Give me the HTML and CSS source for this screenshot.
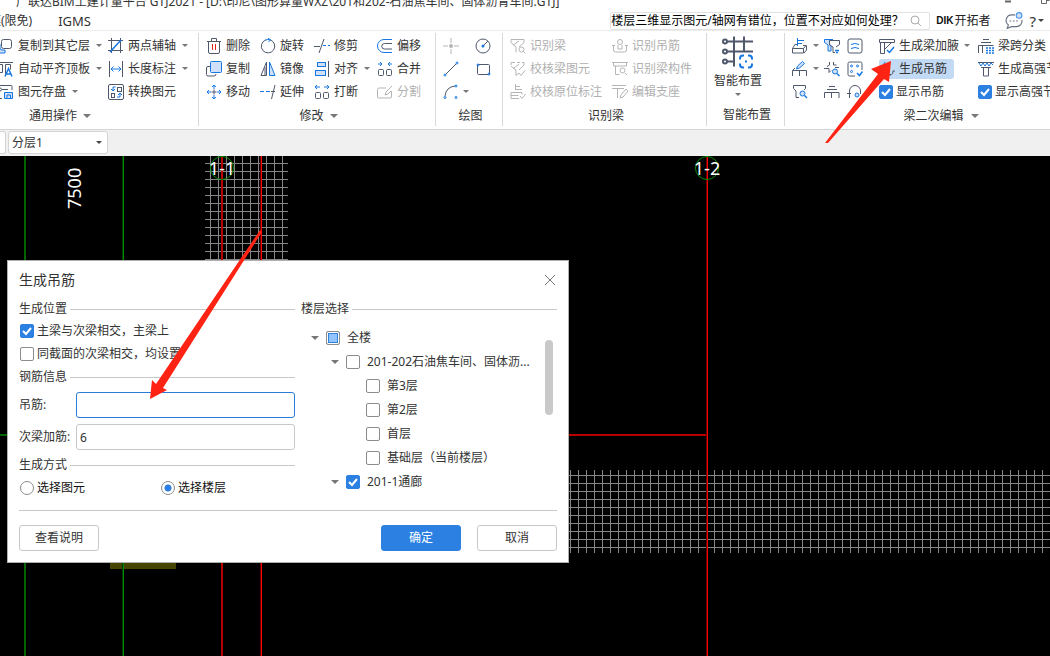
FILE: index.html
```html
<!DOCTYPE html>
<html lang="zh-CN">
<head>
<meta charset="utf-8">
<title>GTJ2021</title>
<link rel="stylesheet" href="styles.css">
</head>
<body>
<svg class="defs" aria-hidden="true">
  <symbol id="copyto" viewBox="0 0 22 16"><path class="b" fill="#cfe0f8" d="M0 6h8v4q0 2 2 2h3v3H0z"/><rect class="g" x="9.500" y="1.500" width="10" height="9" rx="2"/></symbol>
  <symbol id="flat" viewBox="0 0 22 16"><path class="g" d="M0 1.500h21M6.500 3.500h4v8h-4zM0 3.500h3v8H0M13.500 13V3.500h5v5"/><path class="b w" d="M13 15.500l3.500-8 3.500 8M14.500 13h4"/></symbol>
  <symbol id="save" viewBox="0 0 22 16"><path class="g" d="M0 1.500h19q1 0 1 1V6M0 14.500h10M3 5.500h4M10 5.500h6M3 10.500h4"/><circle class="g" cx="8" cy="5.500" r="1.500"/><circle class="g" cx="6" cy="10.500" r="1.500"/><path class="b" fill="#cfe0f8" d="M12.500 8.500h8v6h-8zM15 14v-3h3.500v3"/></symbol>
  <symbol id="axis" viewBox="0 0 16 16"><path class="g" d="M0 2.500h15M3.500 0v15M12.500 0v15M0 12.500h15"/><path class="b w" d="M2 14L13 2"/></symbol>
  <symbol id="length" viewBox="0 0 16 16"><path class="g" d="M1.500 0v16M14.500 0v16"/><path class="b" d="M3 8h10M5.500 5.500L3 8l2.500 2.500M10.500 5.500L13 8l-2.500 2.500"/></symbol>
  <symbol id="convert" viewBox="0 0 16 16"><rect class="g" x=".5" y=".5" width="15" height="15" rx="1.500"/><rect class="g" x="9.500" y="3.500" width="4" height="4"/><rect class="g" x="3.500" y="9.500" width="3" height="4"/><path class="b" d="M7.500 3H5v4M3 5l2 2 2-2M9 13h3V9.500M10 11l2-2 2 2"/></symbol>
  <symbol id="trash" viewBox="0 0 16 16"><path class="g" d="M1 3.500h14M5.500 3V.5h5V3M2.500 4v10q0 1.500 1.500 1.500h8q1.500 0 1.500-1.500V4"/><path d="M6.500 6v6M9.500 6v6" stroke="#e02020" fill="none"/></symbol>
  <symbol id="rotate" viewBox="0 0 16 16"><path class="g" d="M10 1.800A6.700 6.700 0 1 1 5.500 2"/><path class="b" d="M5 2.200Q8 1 10.500 1.800M8 0l2.500 1.800L8.500 4"/></symbol>
  <symbol id="trim" viewBox="0 0 16 16"><path class="g" d="M0 8.500h6M5 15L10 1"/><path class="b" d="M9 7.500h3M14 7.500h2"/></symbol>
  <symbol id="offset" viewBox="0 0 16 16"><path class="b" d="M15 1.500H7a6.500 6.500 0 0 0 0 13h8"/><path class="g" d="M15 5.500H7.500a2.500 2.500 0 0 0 0 5.500H15"/></symbol>
  <symbol id="copy" viewBox="0 0 16 16"><path class="g" d="M4 5.500H2q-1.500 0-1.500 1.500v6.500Q.5 15 2 15h6q2 0 2-2"/><rect class="b" fill="#cfe0f8" x="4.500" y=".5" width="11" height="11" rx="1"/></symbol>
  <symbol id="mirror" viewBox="0 0 16 16"><path class="g" d="M6.500 1v13.500H1z"/><path class="g" d="M5 6v8"/><path class="b" fill="#cfe0f8" d="M9.500 1v13.500H15z"/></symbol>
  <symbol id="align" viewBox="0 0 16 16"><rect class="b" fill="#cfe0f8" x="3.500" y="1.500" width="8" height="4"/><rect class="b" fill="#cfe0f8" x="1.500" y="9.500" width="10" height="5"/><path class="g" d="M14.500 0v16"/></symbol>
  <symbol id="merge" viewBox="0 0 16 16"><path class="b" d="M1 3h4M3 1l2 2-2 2M15 3h-4M13 1l-2 2 2 2"/><rect class="g" x="1.500" y="8.500" width="5" height="6" rx="1"/><rect class="g" x="9.500" y="8.500" width="5" height="6" rx="1"/></symbol>
  <symbol id="move" viewBox="0 0 16 16"><path class="b" d="M8 1v4M8 11v4M1 8h4M11 8h4M6 3l2-2 2 2M6 13l2 2 2-2M3 6L1 8l2 2M13 6l2 2-2 2"/><path class="g" d="M8 5.500v5M5.500 8h5"/></symbol>
  <symbol id="extend" viewBox="0 0 16 16"><path class="b" d="M0 7.500h4M6 7.500h4"/><path class="g" d="M11 7.500h4M11.500 15L15 1"/></symbol>
  <symbol id="break" viewBox="0 0 16 16"><path class="b" d="M1 3h5M3 1L1 3l2 2M10 3h5M13 1l2 2-2 2"/><rect class="g" x="1.500" y="8.500" width="5" height="6" rx="1"/><rect class="g" x="9.500" y="8.500" width="5" height="6" rx="1"/></symbol>
  <symbol id="split" viewBox="0 0 16 16"><path class="d" d="M9 4H2q-1.500 0-1.500 1.500V13q0 1 1.500 1h11q1.500 0 1.500-1V7M8 11l1-3 6-6M8 11l3-1 3-3"/></symbol>
  <symbol id="point" viewBox="0 0 16 16"><path class="d" d="M8 0v5M8 11v5M0 8h5M11 8h5"/><circle cx="8" cy="8" r="2" fill="#b5b5b5"/></symbol>
  <symbol id="circle" viewBox="0 0 16 16"><circle class="g" cx="8" cy="8" r="7"/><path class="g" d="M8 8l5-5"/><circle cx="8" cy="8" r="1.500" fill="#1677e0"/></symbol>
  <symbol id="line" viewBox="0 0 16 16"><path class="g" d="M3 13L13 3"/><circle class="b" cx="2" cy="14" r="1"/><circle class="b" cx="14" cy="2" r="1"/></symbol>
  <symbol id="rect" viewBox="0 0 16 16"><rect class="g" x="2.500" y="3.500" width="12" height="10" rx="1"/><circle class="b" cx="3" cy="4" r="1"/><circle class="b" cx="14" cy="13" r="1"/></symbol>
  <symbol id="arc" viewBox="0 0 16 16"><path class="g" d="M2 12Q3 3 12 2"/><circle class="b" cx="2" cy="13.500" r="1"/><circle class="b" cx="13" cy="2" r="1"/><circle class="b" cx="13" cy="13.500" r="1"/></symbol>
  <symbol id="beam" viewBox="0 0 16 16"><path class="d" d="M1 1.500h13v3L9 9M1 1.500v3l5 4.500v5.500M9 3L3 7"/><circle class="d" cx="11.500" cy="11.500" r="2.500"/><path class="d" d="M13.500 13.500l2 2"/></symbol>
  <symbol id="check" viewBox="0 0 16 16"><path class="d" d="M1 4V1.500h4M7 1.500h3M12 1.500h2V4l-5 5M1 5l5 4v5.500L9 12M9 3L3 8M9 12l2 2.500 4-5"/></symbol>
  <symbol id="origin" viewBox="0 0 16 16"><path class="d" d="M5.500 0v6M6 2.500h4M6 5.500h6M1 8.500h11v2M.5 11.500h8M1 8.500v6h8M10 12l2 2.500 4-5"/></symbol>
  <symbol id="hang" viewBox="0 0 16 16"><circle class="d" cx="8" cy="4" r="2.500"/><path class="d" d="M6 7v4h4V7M0 7.500h3M13 7.500h3M1.500 8v4q0 2 2 2h9q2 0 2-2V8"/></symbol>
  <symbol id="member" viewBox="0 0 16 16"><path class="d" d="M0 1.500h16M1.500 2v3h13V2M3.500 5v8.500h4"/><circle class="d" cx="10.500" cy="9.500" r="2.500"/><path class="d" d="M13 12l2 2"/></symbol>
  <symbol id="seat" viewBox="0 0 16 16"><path class="d" d="M0 1.500h14M0 4.500h12M5.500 5v9M9 11l5-6 2 2-5 6-3 1z"/></symbol>
  <symbol id="smart" viewBox="0 0 32 32"><g class="g h"><path d="M5 5h26M5 15h26M5 25h8M12 0v30M22 0v15"/><circle cx="3" cy="5" r="2"/><circle cx="3" cy="15" r="2"/><circle cx="3" cy="25" r="2"/></g><path class="b h" d="M18 23v-1q0-3 3-3h1M26 19h1q3 0 3 3v1M30 27v1q0 3-3 3h-1M22 31h-1q-3 0-3-3v-1"/><rect x="23" y="24" width="2" height="2" fill="#1677e0"/></symbol>
  <symbol id="print" viewBox="0 0 16 16"><path class="b" d="M5.500 0v8M6 2.500h6M6 5.500h4"/><path class="g" d="M5 6.500H3L.5 10.500h11L14 7.500h-3M.5 10.500v4.500h11v-4.500M14.500 7.500v4.500L12 15"/></symbol>
  <symbol id="filter" viewBox="0 0 16 16"><path class="b" fill="#cfe0f8" d="M9 1.500H.5v3L4 7v6h3V8L5.500 6V2.500z"/><path class="g" d="M5.500 2.500h10v4L12 9M5.500 3v4L9 9v5.500h2"/><path class="b w" d="M11 12.500h4M12 14.500h2"/></symbol>
  <symbol id="approx" viewBox="0 0 16 16"><rect class="g" x="1" y="1" width="14" height="14" rx="2"/><path class="b" d="M4 6.500q4-2 8 0M4 10.500q4-2 8 0"/></symbol>
  <symbol id="pen" viewBox="0 0 16 16"><path class="b" fill="#cfe0f8" d="M4.500 8l1-3 5-4.500 2 2-5 4.500z"/><path class="g" d="M.5 15v-5.500h14V15M7.500 10v5M1 9l2-2"/></symbol>
  <symbol id="cross" viewBox="0 0 16 16"><path class="g" d="M5.500 1v3L3 5.500M9.500 1v3h3M0 7.500h5v4l2-2M11 6.500h4"/><circle class="b" fill="#cfe0f8" cx="11" cy="10.500" r="2.500"/><path class="b w" d="M13 12.500l2.500 2.500"/></symbol>
  <symbol id="dots" viewBox="0 0 16 16"><path class="g" d="M15 9V2.500Q15 1 13.500 1h-11Q1 1 1 2.500v11Q1 15 2.500 15H8"/><circle class="b" cx="4.500" cy="5" r="1"/><circle class="b" cx="10.500" cy="5" r="1"/><circle class="b" cx="4.500" cy="10.500" r="1"/><path class="b w" d="M10 12l2.500 2.500 3-4"/></symbol>
  <symbol id="find" viewBox="0 0 16 16"><path class="g" d="M1.500 1.500h12v3L12 6M1.500 1.500v3L4 7v6.500h3"/><circle class="b" fill="#cfe0f8" cx="10.500" cy="9.500" r="2.500"/><path class="b w" d="M12.500 11.500L15 14"/></symbol>
  <symbol id="stack" viewBox="0 0 16 16"><path class="g" d="M5 2.500h6M3 5.500h10M.5 14V8.500h14.500V14M7.500 9v5"/></symbol>
  <symbol id="arch" viewBox="0 0 16 16"><path class="g" d="M0 9.500h4M2.500 14V7a5.500 5.500 0 0 1 11 0v3"/><circle class="b" fill="#cfe0f8" cx="10" cy="11" r="2"/></symbol>
  <symbol id="haunch" viewBox="0 0 16 16"><path class="g" d="M.5 1.500h15v3H.5zM1.500 5v10.500h4V5M6 11l6-6"/><path class="b w" d="M8 12l2.500 2.500L15 9"/></symbol>
  <symbol id="hoop" viewBox="0 0 16 16"><path class="b" d="M6 1L3 6"/><path class="g" d="M4 8l2 5.500h6.500q1.500 0 1.500-3.500h2M3 14h9"/></symbol>
  <symbol id="span" viewBox="0 0 16 16"><path class="g" d="M5 1.500h6M3 4.500h10M.5 15V7.500h15M4.500 8v7"/><path class="b w" stroke-dasharray="2 1" d="M8 10h8M8 12.500h8M8 15h8"/></symbol>
  <symbol id="strong" viewBox="0 0 16 16"><path class="g" d="M0 1.500h16M3 6.500h10M5.500 7v8h5V7"/><path class="b" d="M1 2l2 3 2-3 2 3 2-3 2 3 2-3 2 2"/></symbol>
  <symbol id="lens" viewBox="0 0 12 12"><circle cx="5" cy="5" r="4" fill="none" stroke="#aaa"/><path d="M8 8l3 3" stroke="#aaa"/></symbol>
</svg>

<header class="titlebar">
  <span class="apptitle">广联达BIM土建计量平台 GTJ2021 - [D:\印尼\图形算量WXZ\201和202-石油焦车间、固体沥青车间.GTJ]</span>
  <svg class="winctl" viewBox="0 0 46 8"><path d="M1 1.500h6" stroke="#666" stroke-width="2"/><path d="M37.500 0v3.500h5V0M42 .5h3.500" fill="none" stroke="#666"/></svg>
</header>
<nav class="menubar">
  <a class="tab first" href="#">建模(限免)</a>
  <a class="tab" href="#">IGMS</a>
  <label class="search"><input type="text" aria-label="搜索" value="楼层三维显示图元/轴网有错位，位置不对应如何处理？"><svg class="lens"><use href="#lens"/></svg></label>
  <span class="brand"><b>DIK</b>开拓者</span>
  <svg class="chat" viewBox="0 0 16 16"><path d="M9 2.500H6a5 5 0 0 0-3 9l-1 3 4-1.500h4a5 5 0 0 0 5-6" fill="none" stroke="#666f80"/><path d="M4 8h1.500M7 8h1.500M10 8h1.500" stroke="#666f80"/><circle cx="12.500" cy="3" r="2.500" fill="#cfe0f8" stroke="#4a94e8"/></svg>
  <button class="help">?<i class="caret dark"></i></button>
</nav>

<section class="ribbon">
  <div class="group common">
    <div class="tools">
      <button class="tool"><svg class="wide"><use href="#copyto"/></svg>复制到其它层<i class="caret"></i></button>
      <button class="tool"><svg><use href="#axis"/></svg>两点辅轴<i class="caret"></i></button>
      <button class="tool"><svg class="wide"><use href="#flat"/></svg>自动平齐顶板<i class="caret"></i></button>
      <button class="tool"><svg><use href="#length"/></svg>长度标注<i class="caret"></i></button>
      <button class="tool"><svg class="wide"><use href="#save"/></svg>图元存盘<i class="caret"></i></button>
      <button class="tool"><svg><use href="#convert"/></svg>转换图元</button>
    </div>
    <button class="caption">通用操作<i class="caret big"></i></button>
  </div>
  <div class="group modify">
    <div class="tools">
      <button class="tool"><svg><use href="#trash"/></svg>删除</button>
      <button class="tool"><svg><use href="#rotate"/></svg>旋转</button>
      <button class="tool"><svg><use href="#trim"/></svg>修剪</button>
      <button class="tool"><svg><use href="#offset"/></svg>偏移</button>
      <button class="tool"><svg><use href="#copy"/></svg>复制</button>
      <button class="tool"><svg><use href="#mirror"/></svg>镜像</button>
      <button class="tool"><svg><use href="#align"/></svg>对齐<i class="caret"></i></button>
      <button class="tool"><svg><use href="#merge"/></svg>合并</button>
      <button class="tool"><svg><use href="#move"/></svg>移动</button>
      <button class="tool"><svg><use href="#extend"/></svg>延伸</button>
      <button class="tool"><svg><use href="#break"/></svg>打断</button>
      <button class="tool" disabled><svg><use href="#split"/></svg>分割</button>
    </div>
    <button class="caption">修改<i class="caret big"></i></button>
  </div>
  <div class="group draw">
    <div class="tools">
      <button class="tool" aria-label="点" disabled><svg><use href="#point"/></svg></button>
      <button class="tool" aria-label="圆"><svg><use href="#circle"/></svg></button>
      <button class="tool" aria-label="直线"><svg><use href="#line"/></svg></button>
      <button class="tool" aria-label="矩形"><svg><use href="#rect"/></svg></button>
      <button class="tool" aria-label="弧"><svg><use href="#arc"/></svg><i class="caret"></i></button>
    </div>
    <span class="caption low">绘图</span>
  </div>
  <div class="group identify">
    <div class="tools">
      <button class="tool" disabled><svg><use href="#beam"/></svg>识别梁</button>
      <button class="tool" disabled><svg><use href="#hang"/></svg>识别吊筋</button>
      <button class="tool" disabled><svg><use href="#check"/></svg>校核梁图元</button>
      <button class="tool" disabled><svg><use href="#member"/></svg>识别梁构件</button>
      <button class="tool" disabled><svg><use href="#origin"/></svg>校核原位标注</button>
      <button class="tool" disabled><svg><use href="#seat"/></svg>编辑支座</button>
    </div>
    <span class="caption low">识别梁</span>
  </div>
  <div class="group auto">
    <button class="bigtool"><svg><use href="#smart"/></svg>智能布置<i class="caret"></i></button>
    <span class="caption low">智能布置</span>
  </div>
  <div class="group second">
    <div class="tools">
      <button class="tool" aria-label="原位标注"><svg><use href="#print"/></svg><i class="caret"></i></button>
      <button class="tool" aria-label="过滤"><svg><use href="#filter"/></svg></button>
      <button class="tool" aria-label="应用同名梁"><svg><use href="#approx"/></svg></button>
      <button class="tool"><svg><use href="#haunch"/></svg>生成梁加腋<i class="caret"></i></button>
      <button class="tool"><svg><use href="#span"/></svg>梁跨分类</button>
      <button class="tool" aria-label="编辑"><svg><use href="#pen"/></svg><i class="caret"></i></button>
      <button class="tool" aria-label="查改"><svg><use href="#cross"/></svg></button>
      <button class="tool" aria-label="校核"><svg><use href="#dots"/></svg></button>
      <button class="tool active"><svg><use href="#hoop"/></svg>生成吊筋</button>
      <button class="tool"><svg><use href="#strong"/></svg>生成高强节点</button>
      <button class="tool" aria-label="查找"><svg><use href="#find"/></svg></button>
      <button class="tool" aria-label="支座"><svg><use href="#stack"/></svg></button>
      <button class="tool" aria-label="拱"><svg><use href="#arch"/></svg><i class="caret"></i></button>
      <label class="tool tick"><input type="checkbox" checked>显示吊筋</label>
      <label class="tool tick"><input type="checkbox" checked>显示高强节点</label>
    </div>
    <button class="caption">梁二次编辑<i class="caret big"></i></button>
  </div>
</section>

<div class="layerbar">
  <span class="stub"></span>
  <span class="picker"><select aria-label="分层"><option>分层1</option></select><i class="caret dark"></i></span>
</div>

<main class="canvas">
  <svg class="drawing">
    <defs>
      <pattern id="mesh" width="8" height="8" patternUnits="userSpaceOnUse" x="2" y="7"><path d="M0 .5h8M.5 0v8" stroke="#868686"/></pattern>
    </defs>
    <rect x="205" y="0" width="83" height="105" fill="url(#mesh)"/>
    <rect x="569" y="314" width="100%" height="83" fill="url(#mesh)"/>
    <rect x="110" y="400" width="66" height="13" fill="#454500"/>
    <path d="M25 0V900M0 279H9" stroke="#006400" stroke-width="2"/>
    <path d="M123 0V900" stroke="#003c00" stroke-width="2"/>
    <path d="M123.500 0V900" stroke="#008c00"/>
    <path d="M222 0V900M569 279H707" stroke="#b80000" stroke-width="2"/>
    <path d="M261 0V900M707 0V900" stroke="#700000" stroke-width="2"/>
    <path d="M261.500 0V900M707.500 0V900" stroke="#ff0000"/>
    <circle cx="222" cy="12" r="11.500" fill="none" stroke="#009000"/>
    <circle cx="707" cy="12" r="11.500" fill="none" stroke="#009000"/>
    <text class="mark" x="222" y="19">1-1</text>
    <text class="mark" x="707" y="19">1-2</text>
    <text class="dim" transform="translate(81 53) rotate(-90)">7500</text>
  </svg>

  <form class="dialog">
    <header class="dlghead"><h1>生成吊筋</h1><button type="button" class="close" aria-label="关闭"><svg viewBox="0 0 12 12"><path d="M1 1l10 10M11 1L1 11" stroke="#777" fill="none"/></svg></button></header>
    <div class="cols">
      <div class="left">
        <h2>生成位置</h2>
        <label class="opt"><input type="checkbox" checked>主梁与次梁相交，主梁上</label>
        <label class="opt"><input type="checkbox">同截面的次梁相交，均设置</label>
        <h2>钢筋信息</h2>
        <div class="field"><label for="bar">吊筋:</label><input id="bar" class="focus" type="text"></div>
        <div class="field"><label for="extra">次梁加筋:</label><input id="extra" type="text" value="6"></div>
        <h2>生成方式</h2>
        <div class="radios">
          <label class="opt"><input type="radio" name="mode">选择图元</label>
          <label class="opt"><input type="radio" name="mode" checked>选择楼层</label>
        </div>
      </div>
      <div class="right">
        <h2>楼层选择</h2>
        <div class="treebox">
          <ul class="tree">
            <li><i class="caret big"></i><label><input type="checkbox" class="partial">全楼</label></li>
            <li class="l1"><i class="caret big"></i><label><input type="checkbox">201-202石油焦车间、固体沥...</label></li>
            <li class="l2"><label><input type="checkbox">第3层</label></li>
            <li class="l2"><label><input type="checkbox">第2层</label></li>
            <li class="l2"><label><input type="checkbox">首层</label></li>
            <li class="l2"><label><input type="checkbox">基础层（当前楼层）</label></li>
            <li class="l1"><i class="caret big"></i><label><input type="checkbox" checked>201-1通廊</label></li>
          </ul>
          <span class="thumb"></span>
        </div>
      </div>
    </div>
    <footer class="actions">
      <button type="button">查看说明</button>
      <button type="button" class="primary">确定</button>
      <button type="button">取消</button>
    </footer>
  </form>
</main>
<svg class="arrows"><path d="M825 143L878 74 871 69 891 61 889 82 884 79 828 143zM260 230L262 232 163 388 167 390 150 399 152 380 156 384z"/></svg>
</body>
</html>
```
FILE: styles.css
```css
* { box-sizing: border-box; }
body {
  margin: 0;
  height: 100vh;
  display: flex;
  flex-direction: column;
  overflow: hidden;
  background: #fff;
  color: #333;
  font: 12px/16px "Noto Sans", "Noto Sans CJK SC", sans-serif;
}
button, input, select { font: inherit; color: inherit; }
button { border: 0; padding: 0; background: none; white-space: nowrap; }
.defs { display: none; }
.g, .b, .d { fill: none; stroke: #50586c; }
.b { stroke: #1677e0; }
.d { stroke: #b5b5b5; }
.w { stroke-width: 1.5; }
.h { stroke-width: 2; }
[fill="#cfe0f8"] { fill: #cfe0f8; }

.caret {
  flex: none;
  border: 3px solid transparent;
  border-top-color: #777;
  border-bottom: 0;
}
.caret.big { border-width: 4px 4px 0; }
.caret.dark { border-top-color: #444; }

.titlebar { display: flex; justify-content: space-between; height: 10px; overflow: hidden; }
.apptitle { align-self: flex-end; padding-left: 16px; white-space: nowrap; }
.winctl { width: 46px; height: 8px; }

.menubar { display: flex; align-items: center; height: 20px; padding-top: 1px; }
.tab { color: #333; text-decoration: none; white-space: nowrap; font-size: 13px; }
.tab.first { margin-left: -23px; margin-right: 26px; font-size: 12px; }
.search {
  display: flex;
  align-items: center;
  width: 320px;
  height: 18px;
  margin-left: auto;
  padding-right: 7px;
  border: 1px solid #e2e2e2;
  border-radius: 2px;
}
.search input { flex: 1; min-width: 0; height: 16px; border: 0; padding: 0; outline: 0; background: none; color: #000; }
.lens { width: 12px; height: 12px; }
.brand { display: flex; align-items: center; gap: 1px; margin-left: 6px; color: #222; white-space: nowrap; }
.brand b { color: #111; font: bold 10px/16px "Liberation Sans", sans-serif; }
.chat { width: 18px; height: 18px; margin-left: 15px; }
.help { display: flex; align-items: center; gap: 2px; margin: 0 6px; font-size: 15px; }

.ribbon {
  display: flex;
  height: 100px;
  margin-left: -8px;
  border-top: 1px solid #ececec;
  border-bottom: 1px solid #d4d4d4;
}
.group { flex: none; display: flex; flex-direction: column; padding: 3px 8px 0; }
.group + .group { background: linear-gradient(#d9d9d9, #d9d9d9) 0 2px / 1px 93px no-repeat; }
.tools { display: grid; grid-auto-rows: 23px; align-items: center; }
.tool { display: flex; align-items: center; gap: 4px; justify-self: start; height: 20px; white-space: nowrap; }
.tool svg { flex: none; width: 16px; height: 16px; }
.tool svg.wide { width: 22px; }
.tool .caret { margin-left: 2px; }
.tool:disabled { color: #b0b0b0; }
.tool.tick { gap: 3px; }
.caption { display: flex; align-items: center; justify-content: center; gap: 6px; height: 26px; padding-left: 4px; }

.common { width: 206px; padding-left: 0; }
.common .tools { grid-template-columns: 116px 1fr; }
.common .caption { padding-right: 66px; }
.modify { width: 237px; }
.modify .tools { grid-template-columns: 54px 54px 63px 1fr; }
.draw { width: 67px; }
.draw .tools { grid-template-columns: 32px 1fr; }
.draw .caret { margin-left: 0; }
.identify { width: 204px; }
.identify .tools { grid-template-columns: 102px 1fr; }
.caption.low { height: 28px; }
.auto { width: 78px; }
.bigtool { display: flex; flex-direction: column; align-items: center; align-self: flex-start; gap: 5px; height: 69px; padding-top: 2px; line-height: 14px; }
.bigtool svg { width: 32px; height: 33px; }
.second { width: 274px; }
.second .tools { grid-template-columns: 32px 23px 32px 99px 1fr; }
.second .caption { padding-left: 40px; }
.second .caret { margin-left: 1px; }
.tool.active { background: #c3daf4; border-radius: 3px; padding-right: 7px; }

input[type="checkbox"], input[type="radio"] {
  appearance: none;
  flex: none;
  width: 14px;
  height: 14px;
  margin: 0;
  border: 1px solid #8c8c8c;
  border-radius: 2px;
  background: #fff;
}
input[type="checkbox"]:checked {
  border-color: #2b80e2;
  background: #2b80e2 url("data:image/svg+xml,%3Csvg xmlns='http://www.w3.org/2000/svg' viewBox='0 0 12 12'%3E%3Cpath d='M2 6l3 3 5-6' fill='none' stroke='white' stroke-width='2'/%3E%3C/svg%3E");
}
input[type="checkbox"].partial { background: #92c4ff; box-shadow: inset 0 0 0 1px #fff, inset 0 0 0 2px #2b80e2; }
input[type="radio"] { border-radius: 50%; }
input[type="radio"]:checked { background: radial-gradient(#2b80e2 3px, #fff 4px); }

.layerbar { display: flex; gap: 2px; height: 26px; padding-top: 1px; background: #f0f0f0; }
.stub { width: 6px; height: 23px; background: #fff; border: 1px solid #d4d4d4; border-left: 0; border-radius: 0 3px 3px 0; }
.picker { display: flex; align-items: center; width: 100px; height: 23px; padding-right: 5px; background: #fff; border: 1px solid #d4d4d4; border-radius: 3px; }
.picker select { flex: 1; appearance: none; border: 0; padding: 0 3px; background: none; }

.canvas { flex: 1; position: relative; overflow: hidden; background: #000; }
.drawing { display: block; width: 100%; height: 100%; }
.mark, .dim { fill: #fff; font: 18px "Noto Sans", sans-serif; }
.mark { text-anchor: middle; }

.dialog {
  position: absolute;
  left: 7px;
  top: 104px;
  width: 562px;
  padding: 0 11px 11px;
  border: 1px solid #b0b0b0;
  background: #fff;
}
.dlghead { display: flex; justify-content: space-between; align-items: center; height: 38px; }
h1 { margin: 0; font-size: 14px; font-weight: normal; }
.close { display: flex; padding-right: 1px; }
.close svg { width: 12px; height: 12px; }
.cols { display: flex; gap: 6px; height: 212px; border-bottom: 1px solid #c8c8c8; }
.left { width: 276px; }
.right { flex: 1; }
h2 { display: flex; align-items: center; gap: 3px; height: 20px; margin: 0; font-size: 12px; font-weight: normal; }
h2::after { content: ""; flex: 1; height: 1px; background: #c8c8c8; }
.opt { display: flex; align-items: center; gap: 3px; height: 23px; padding-left: 1px; }
.opt + h2 { margin-top: 2px; }
.field { display: flex; align-items: center; height: 26px; margin-bottom: 6px; }
h2 + .field { margin-top: 5px; }
.field + h2 { margin-top: -1px; }
.field label { width: 57px; white-space: nowrap; }
.field input { flex: 1; min-width: 0; height: 26px; padding: 0 3px; border: 1px solid #c8c8c8; border-radius: 3px; background: #fff; outline: 0; }
.field input.focus { border-color: #2b7cd9; }
.radios { display: grid; grid-template-columns: 141px 1fr; padding-top: 1px; color: #111; }
.treebox { display: flex; justify-content: space-between; padding: 7px 4px 0 10px; }
.tree { list-style: none; margin: 0; padding: 0; }
.tree li { display: flex; align-items: center; gap: 7px; height: 24px; }
.tree .l1 { padding-left: 20px; }
.tree .l2 { padding-left: 55px; }
.tree label { display: flex; align-items: center; gap: 7px; white-space: nowrap; }
.thumb { width: 8px; height: 75px; margin-top: 14px; border-radius: 4px; background: #c9c9c9; }
.actions { display: flex; gap: 16px; padding-top: 14px; }
.actions button { width: 80px; height: 26px; border: 1px solid #c8c8c8; border-radius: 3px; background: #fff; }
.actions button:first-child { margin-right: auto; }
.actions .primary { border-color: #2b80e2; background: #2b80e2; color: #fff; }

.arrows { position: absolute; inset: 0; width: 100%; height: 100%; pointer-events: none; fill: #ff2314; }
```
